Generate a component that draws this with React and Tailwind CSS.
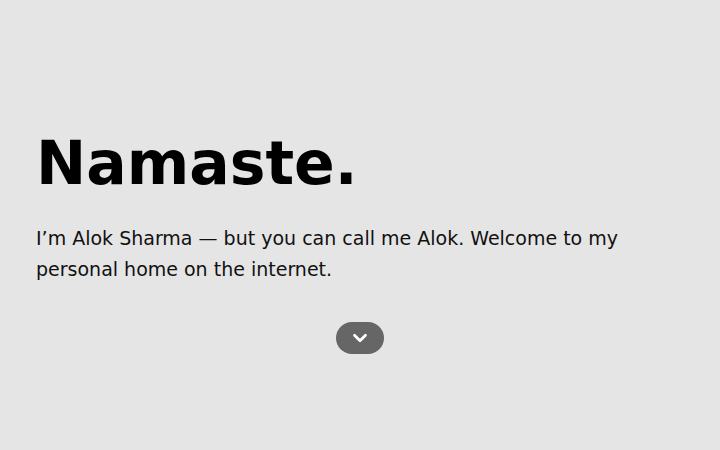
export default function App() {
  return (
    <div
      className="w-full h-[450px] bg-[#e5e5e5] text-[#111] flex flex-col justify-center px-9 pt-[37px]"
      style={{ fontFamily: '"DejaVu Sans", sans-serif' }}
    >
      <h1 className="text-[60px] font-bold leading-none text-black">Namaste.</h1>
      <p className="mt-[30px] text-[19px] leading-[31px] max-w-[620px]">
        I’m Alok Sharma — but you can call me Alok. Welcome to my personal home on the internet.
      </p>
      <div className="flex justify-center mt-[37px]">
        <button className="w-12 h-8 rounded-full bg-[#666] flex items-center justify-center">
          <svg width="22" height="22" viewBox="0 0 24 24" fill="none" stroke="white" strokeWidth="3" strokeLinecap="round" strokeLinejoin="round">
            <polyline points="6 9 12 15 18 9" />
          </svg>
        </button>
      </div>
    </div>
  )
}
